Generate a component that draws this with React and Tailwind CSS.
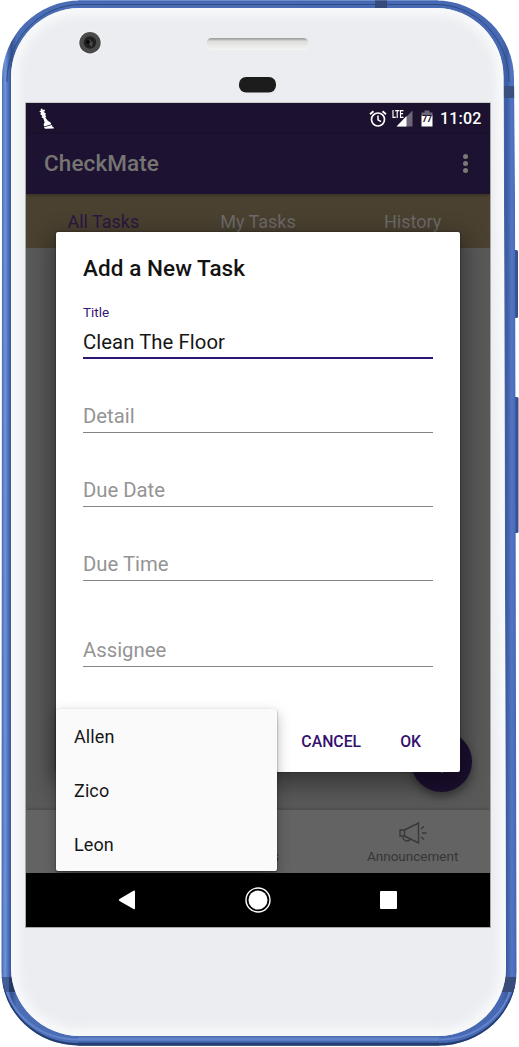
import React from "react";

const BODY =
  "M80 0.5H436A78 78 0 0 1 514 78.500L515 200L516.5 972A78 74 0 0 1 438 1045.500H79A77.500 74 0 0 1 1.500 972L2 200V78.500A78 78 0 0 1 80 0.500Z";
const FACE =
  "M80 8H436A67.500 69 0 0 1 503.500 77L504 200L506 968A68 68 0 0 1 438 1036H80A69 68 0 0 1 11 968V77A69 69 0 0 1 80 8Z";

function PhoneBody() {
  return (
    <svg className="absolute inset-0" width="519" height="1047" viewBox="0 0 519 1047" aria-hidden="true">
      <defs>
        <linearGradient id="edge" gradientUnits="userSpaceOnUse" x1="1" y1="0" x2="517" y2="0">
          <stop offset="0" stopColor="#3f61a4" />
          <stop offset="0.008" stopColor="#7094dc" />
          <stop offset="0.014" stopColor="#4b70b9" />
          <stop offset="0.02" stopColor="#36528d" />
          <stop offset="0.03" stopColor="#4a6db5" />
          <stop offset="0.97" stopColor="#4769b3" />
          <stop offset="0.98" stopColor="#3d5ba0" />
          <stop offset="0.99" stopColor="#5376c4" />
          <stop offset="1" stopColor="#4163b0" />
        </linearGradient>
        <linearGradient id="edgeBottom" gradientUnits="userSpaceOnUse" x1="0" y1="1035" x2="0" y2="1046">
          <stop offset="0" stopColor="#3f5c96" />
          <stop offset="0.35" stopColor="#6688d0" />
          <stop offset="0.65" stopColor="#3f60a6" />
          <stop offset="0.85" stopColor="#243d70" />
          <stop offset="1" stopColor="#24345d" />
        </linearGradient>
        <linearGradient id="speaker" x1="0" y1="0" x2="0" y2="1">
          <stop offset="0" stopColor="#999" />
          <stop offset="0.15" stopColor="#b5b5b5" />
          <stop offset="0.28" stopColor="#dedede" />
          <stop offset="1" stopColor="#f1f1ef" />
        </linearGradient>
        <filter id="soft" x="-5%" y="-5%" width="110%" height="110%">
          <feGaussianBlur stdDeviation="5" />
        </filter>
        <clipPath id="faceClip">
          <path d={FACE} />
        </clipPath>
        <clipPath id="bodyClip">
          <path d={BODY} />
        </clipPath>
      </defs>
      <rect x="513" y="250" width="5" height="68" rx="1.500" fill="#36528d" />
      <rect x="513" y="397" width="5.500" height="136" rx="1.500" fill="#36528d" />
      <path d={BODY} fill="url(#edge)" />
      <g clipPath="url(#bodyClip)">
        <rect x="78" y="1035" width="361" height="11" fill="url(#edgeBottom)" />
        <path d="M2 985A77.500 74 0 0 0 79 1045H438A78 74 0 0 0 516 985" fill="none" stroke="#243d70" strokeWidth="4" />
        <path d="M5.500 985A73 66 0 0 0 79 1039.500H438A73 66 0 0 0 511.500 985" fill="none" stroke="#6384cc" strokeWidth="2" />
        <path d="M78 1H438" stroke="#4166b5" strokeWidth="2" />
        <path d="M7 82A74 77 0 0 1 80 4.500H436A73 77 0 0 1 509 82" fill="none" stroke="#2f4b83" strokeWidth="1" />
        <rect x="375" y="0" width="12" height="9" fill="#374a7c" />
        <rect x="502" y="86" width="14" height="12" fill="#3c507f" />
        <rect x="0" y="977" width="9" height="15" fill="#3a5489" fillOpacity="0.8" />
        <rect x="9" y="977" width="6" height="15" fill="#1f325c" fillOpacity="0.8" />
        <rect x="502" y="977" width="17" height="15" fill="#394b79" />
      </g>
      <path d={FACE} fill="#ecedf1" />
      <g clipPath="url(#faceClip)">
        <path d={FACE} fill="none" stroke="#f8f9fa" strokeWidth="14" filter="url(#soft)" />
      </g>
      <circle cx="90" cy="43" r="11.600" fill="#f8f8f8" />
      <circle cx="90" cy="42.800" r="10.700" fill="#4b4b4b" />
      <circle cx="90" cy="42.500" r="6.200" fill="#202020" />
      <path d="M89 39L93 43L91.500 47L88 43Z" fill="#484848" />
      <circle cx="88" cy="42" r="2" fill="#080808" />
      <rect x="206" y="38" width="103" height="12" rx="6" fill="#f4f4f3" />
      <rect x="206.500" y="38" width="102" height="11" rx="5" fill="url(#speaker)" />
      <rect x="239" y="77" width="37" height="15.500" rx="7" fill="#1c1c1c" />
      <rect x="25" y="102.500" width="466" height="825.500" fill="#a9aaa6" />
    </svg>
  );
}

function StatusBar() {
  return (
    <div className="flex h-[31px] items-center bg-[#1c112e] text-white">
      <svg className="ml-3" width="16" height="22" viewBox="0 0 16 22" fill="#fff" aria-hidden="true">
        <path d="M1.200 3.200L3 2.600L2.600 1L4.200 0.600L4.800 2L6.600 1.600L7 3.200L5.500 3.800L7.800 5.500L7.300 7.500L8.300 8.200L7.300 9.300L9.500 12.500L12.500 14.500L13.300 16.300L6.200 18.400L5.600 16.500L6.600 14.200L5.200 10L3.800 9.800L3.700 8.500L4.600 8L2.300 6.300L3 4.400Z" />
        <path d="M6 19.300L14 17L14.500 19L15.800 19.200V20.500L7 20.800Z" />
      </svg>
      <svg className="ml-[315px]" width="18" height="18" viewBox="0 0 18 18" fill="none" stroke="#fff" aria-hidden="true">
        <circle cx="9" cy="9.500" r="6.500" strokeWidth="1.700" />
        <path d="M1 4.200L4.500 1.200M17 4.200L13.500 1.200" strokeWidth="1.800" />
        <path d="M9 5.500V9.800L12 11.600" strokeWidth="1.500" />
      </svg>
      <div className="relative ml-[5px] h-[18px] w-[22px]">
        <svg className="absolute inset-0" width="22" height="18" viewBox="0 0 22 18" aria-hidden="true">
          <path d="M20.500 0.500V16.500H5Z" fill="#6d6678" />
          <path d="M14.500 6V16.500H4.500Z" fill="#fff" />
        </svg>
        <span className="absolute left-0 top-0 h-[9px] origin-left scale-x-[0.72] bg-[#1c112e] text-[10px] font-bold leading-[9px]">LTE</span>
      </div>
      <div className="relative ml-[7px] h-[18px] w-[12px]">
        <svg width="12" height="18" viewBox="0 0 12 18" aria-hidden="true">
          <path d="M3.500 0.500H8.500V2.500H11.500V6H0.500V2.500H3.500Z" fill="#6d6678" />
          <path d="M0.500 5.500H11.500V16.500H0.500Z" fill="#fff" />
        </svg>
        <span className="absolute left-[1px] top-[5px] text-[9px] font-bold leading-[9px] tracking-[-0.5px] text-[#1c112e]">77</span>
      </div>
      <span className="ml-[7px] text-[16px] font-medium tracking-[0.2px]">11:02</span>
    </div>
  );
}

function AppBar() {
  return (
    <div className="relative z-10 flex h-[60px] items-center justify-between bg-[#1e1233] pl-[18px] pr-[22px] text-[#767571] shadow-[0_1px_3px_rgba(0,0,0,0.3)]">
      <h1 className="text-[22.5px] font-medium tracking-[0.1px]">CheckMate</h1>
      <div className="-mt-[1px] flex flex-col gap-[2px]">
        <i className="h-[5px] w-[5px] rounded-full bg-[#7a7973]" />
        <i className="h-[5px] w-[5px] rounded-full bg-[#7a7973]" />
        <i className="h-[5px] w-[5px] rounded-full bg-[#7a7973]" />
      </div>
    </div>
  );
}

function Tabs() {
  return (
    <div className="grid h-[54px] grid-cols-3 bg-[#4a4130] pt-[15px] text-center text-[18px] leading-[26px] text-[#6c6b69]">
      <span className="text-[#2b1740]">All Tasks</span>
      <span>My Tasks</span>
      <span>History</span>
    </div>
  );
}

function BottomBar() {
  return (
    <div className="relative grid h-[63px] grid-cols-3 bg-[#636363] text-center shadow-[0_-1px_3px_rgba(0,0,0,0.2)]">
      <span />
      <span className="pt-[38px] text-[15.8px] leading-[18px] text-[#2b1650]">Tasks</span>
      <div className="flex flex-col items-center pt-3 text-[#363636]">
        <svg width="28" height="22" viewBox="0 0 28 22" fill="none" stroke="#383838" strokeWidth="1.400" aria-hidden="true">
          <path d="M1 8H5.500V14H1ZM5.500 8L19.500 1V21L5.500 14M3.500 14C4 17 5 19 8 19C10 19 11 18 11.500 16.500" />
          <path d="M22 7L25 4.500M23 11H27.500M22 15L25 17.500" />
        </svg>
        <span className="mt-[3px] text-[13.5px] leading-[18px]">Announcement</span>
      </div>
    </div>
  );
}

function NavigationBar() {
  return (
    <div className="flex h-[54px] items-center justify-between bg-black pl-[92px] pr-[93px]">
      <svg width="18" height="20" viewBox="0 0 18 20" fill="#fff" aria-hidden="true">
        <path d="M15.500 0.800Q17 0 17 2V18Q17 20 15.500 19L1.500 11Q0 10 1.500 9Z" />
      </svg>
      <svg width="26" height="26" viewBox="0 0 26 26" aria-hidden="true">
        <circle cx="13" cy="13" r="12" fill="none" stroke="#fff" strokeWidth="1.400" />
        <circle cx="13" cy="13" r="9.500" fill="#fff" />
      </svg>
      <i className="h-[18px] w-[17px] rounded-[1px] bg-white" />
    </div>
  );
}

function EmptyField({ label, className }) {
  return (
    <div className={"border-b border-[#858585] text-[20.3px] text-[#949494] " + className}>{label}</div>
  );
}

function TaskDialog() {
  return (
    <section className="absolute left-[30px] top-[129px] z-20 flex h-[540px] w-[404px] flex-col rounded-[2px] bg-white px-[27px] pt-[22px] shadow-[0_8px_22px_5px_rgba(0,0,0,0.38),0_0_2px_#222]">
      <h2 className="text-[22.5px] font-medium leading-7 tracking-[0.07px] text-[#131313]">Add a New Task</h2>
      <label className="mt-[22px] text-[13.5px] leading-4 text-[#371573]">Title</label>
      <div className="mt-[8px] h-[31px] border-b-2 border-[#2f1573] text-[20.3px] leading-[29px] tracking-[0.07px] text-[#161616]">Clean The Floor</div>
      <EmptyField label="Detail" className="mt-[42px] h-[32px] leading-[31px]" />
      <EmptyField label="Due Date" className="mt-[42px] h-[32px] leading-[31px]" />
      <EmptyField label="Due Time" className="mt-[42px] h-[32px] leading-[31px]" />
      <EmptyField label="Assignee" className="mt-[54px] h-[32px] leading-[31px]" />
      <div className="mt-[65px] flex justify-end gap-[39px] pr-[12px] text-[15.8px] font-medium leading-5 text-[#34116e]">
        <button>CANCEL</button>
        <button>OK</button>
      </div>
    </section>
  );
}

function AssigneeMenu() {
  return (
    <ul className="absolute left-[30px] top-[606px] z-30 h-[162px] w-[221px] rounded-[2px] bg-[#fafafa] text-[18px] leading-[56px] text-[#161616] shadow-[0_5px_14px_rgba(0,0,0,0.28),0_1px_2px_rgba(0,0,0,0.5)]">
      {["Allen", "Zico", "Leon"].map((name) => (
        <li key={name} className="h-[54px] pl-[18px] tracking-[0.1px]">{name}</li>
      ))}
    </ul>
  );
}

export default function App() {
  return (
    <main className="relative h-[1047px] w-[519px] overflow-hidden bg-white pl-[26px] pt-[103px] font-['Roboto',sans-serif]">
      <PhoneBody />
      <div className="relative h-[824px] w-[464px] overflow-hidden">
        <StatusBar />
        <AppBar />
        <Tabs />
        <div className="h-[562px] bg-[#595959]">
          <div className="absolute left-[385px] top-[628px] h-[61px] w-[61px] rounded-full bg-[#1c0f31] shadow-[0_5px_9px_rgba(0,0,0,0.35)]">
            <i className="absolute left-[30px] top-[22px] h-[20px] w-[2px] bg-[#777]" />
          </div>
        </div>
        <BottomBar />
        <NavigationBar />
        <TaskDialog />
        <AssigneeMenu />
      </div>
    </main>
  );
}
